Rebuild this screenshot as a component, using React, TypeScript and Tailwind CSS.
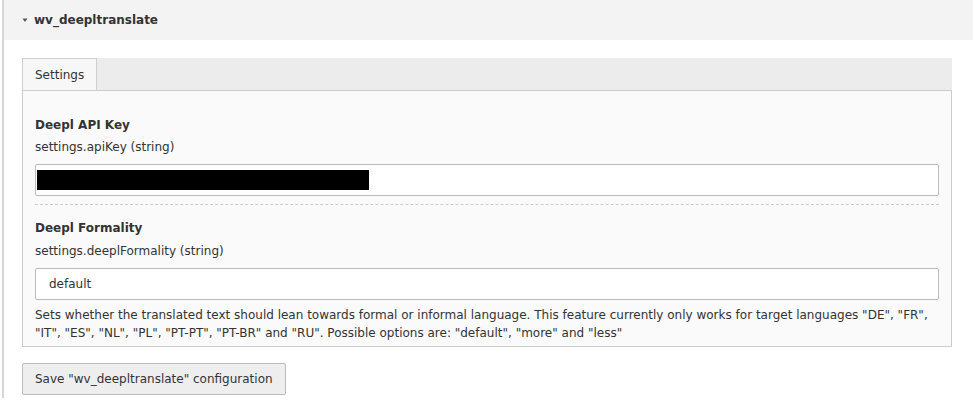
import React from "react";

export default function App() {
  return (
    <div className="h-[408px] w-[973px] bg-white font-['DejaVu_Sans',Verdana,sans-serif] text-[12px] leading-[18px] text-[#333]">
      <div className="ml-[2px] h-[398px] border-l-2 border-[#d7d7d7]">
        <div className="flex h-[40px] items-center bg-[#f3f3f3] pl-[18px]">
          <svg width="6" height="4" viewBox="0 0 6 4" className="mr-[6px]">
            <path d="M0.5 0.5 L5.5 0.5 L3 4 Z" fill="#555" />
          </svg>
          <span className="font-bold">wv_deepltranslate</span>
        </div>
        <div className="pl-[18px] pr-[21px] pt-[18px]">
          <div className="flex h-[32px] bg-[#ececec]">
            <div className="flex h-[32px] items-center border border-b-0 border-[#cfcfcf] bg-[#f7f7f7] px-[12px]">
              Settings
            </div>
          </div>
          <div className="border border-[#cccccc] bg-[#fafafa] px-[12px] pb-[4px] pt-[25px]">
            <div className="font-bold">Deepl API Key</div>
            <div className="mt-[4px]">settings.apiKey (string)</div>
            <div className="mt-[8px] flex h-[32px] items-center rounded-[2px] border border-[#bbbbbb] bg-white pl-[1px]">
              <div className="h-[20px] w-[332px] bg-black" />
            </div>
            <div className="mt-[8px] border-t border-dashed border-[#cccccc]" />
            <div className="mt-[14px] font-bold">Deepl Formality</div>
            <div className="mt-[5px]">settings.deeplFormality (string)</div>
            <div className="mt-[8px] flex h-[32px] items-center rounded-[2px] border border-[#bbbbbb] bg-white pl-[13px]">
              default
            </div>
            <div className="mt-[6px] text-[#333]">
              Sets whether the translated text should lean towards formal or informal language. This feature currently only works for target languages "DE", "FR", "IT", "ES", "NL", "PL", "PT-PT", "PT-BR" and "RU". Possible options are: "default", "more" and "less"
            </div>
          </div>
          <button className="mt-[16px] flex h-[32px] items-center rounded-[2px] border border-[#bbbbbb] bg-[#eeeeee] px-[12px] text-[#333]">
            Save "wv_deepltranslate" configuration
          </button>
        </div>
      </div>
    </div>
  );
}
